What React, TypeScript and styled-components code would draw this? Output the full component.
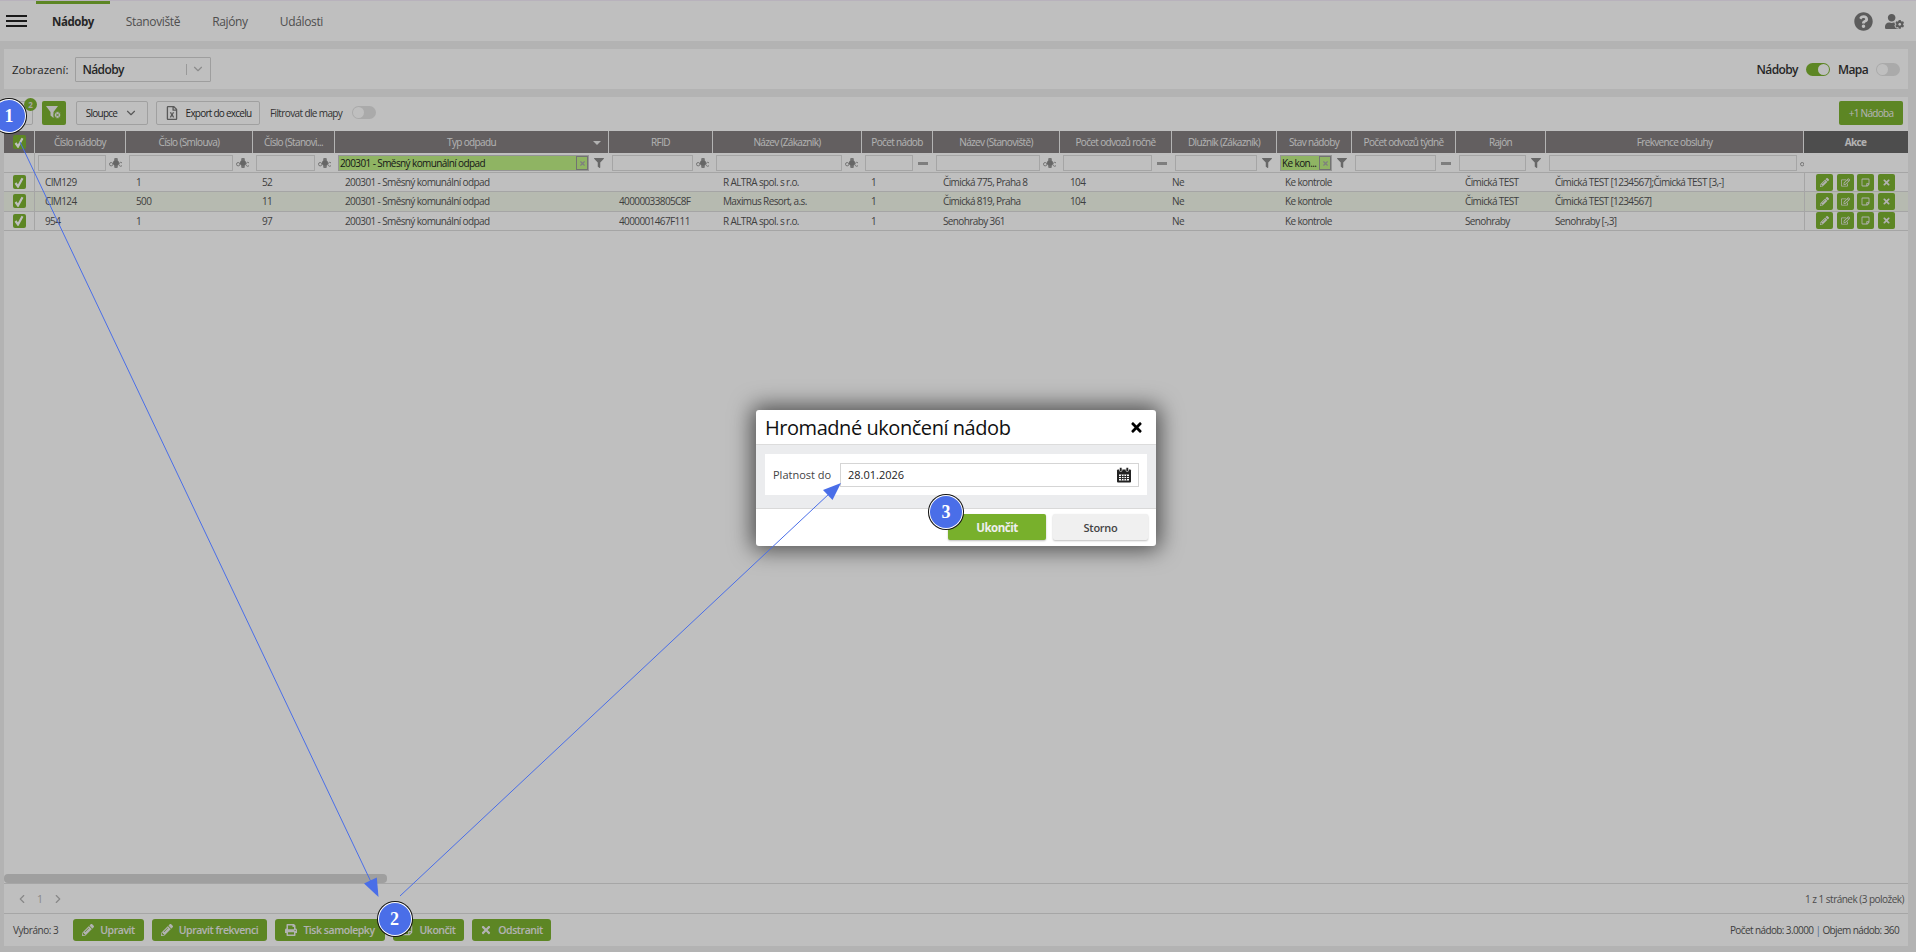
import React from "react";
import styled, { createGlobalStyle } from "styled-components";
import { ChevronDown, ChevronLeft, ChevronRight } from "lucide-react";
import {
  FaPencilAlt, FaPrint, FaTimes, FaRegEdit, FaRegStickyNote, FaFilter,
  FaQuestionCircle, FaUserCog, FaRegFileExcel,
} from "react-icons/fa";

const Global = createGlobalStyle`
  html, body { margin: 0; padding: 0; height: 100%; overflow: hidden; }
  body { font-family: "Open Sans", "Liberation Sans", sans-serif; color: #444; background: #efefef; }
  * { box-sizing: border-box; }
`;

const COLS = "31px 91px 127px 82px 274px 104px 149px 71px 127px 112px 105px 75px 104px 90px 258px 104px";
const GREEN = "#7db331";

const Page = styled.div`
  position: relative;
  width: 1916px; height: 952px; overflow: hidden;
  display: flex; flex-direction: column;
`;
const TopBar = styled.header`
  height: 41px; background: #fff; border-top: 1px solid #f6eefb;
  display: flex; align-items: center; padding: 0 12px 0 6px;
  flex: none;
`;
const Burger = styled.div`
  width: 21px; height: 12px; margin-right: 9px; flex: none;
  border-top: 2px solid #222; border-bottom: 2px solid #222; position: relative;
  &::after { content: ""; position: absolute; left: 0; right: 0; top: 3px; height: 2px; background: #222; }
`;
const Tab = styled.div<{ $active?: boolean }>`
  align-self: stretch; height: 40px; padding: 0 16px 3px; display: flex; align-items: center;
  font-size: ${p => (p.$active ? 11.5 : 12)}px;
  letter-spacing: ${p => (p.$active ? -0.45 : -0.35)}px;
  font-weight: ${p => (p.$active ? 700 : 400)};
  color: ${p => (p.$active ? "#333" : "#6a6a6a")};
  border-top: 3px solid ${p => (p.$active ? GREEN : "transparent")};
`;
const TopIcons = styled.div`
  margin-left: auto; display: flex; align-items: center; gap: 12px; color: #7b7b7b; font-size: 19px;
`;
const ViewBar = styled.section`
  flex: none; height: 40px; margin: 8px 8px 0 4px; background: #fff;
  display: flex; align-items: center; padding: 0 8px 0 8px; font-size: 11.5px; color: #333;
`;
const ViewLabel = styled.span` margin-right: 7px; `;
const ViewSelect = styled.div`
  width: 136px; height: 25px; border: 1px solid #d3d3d3; display: flex; align-items: center;
  padding: 0 5px 0 6px; font-weight: 600; font-size: 12px; letter-spacing: -.6px; color: #333; border-radius: 1px;
`;
const SelectSep = styled.i`
  margin-left: auto; width: 1px; height: 11px; background: #ccc; margin-right: 4px;
`;
const SwitchGroup = styled.div`
  margin-left: auto; display: flex; align-items: center; gap: 8px; font-weight: 600; font-size: 12px; letter-spacing: -.6px;
`;
const Switch = styled.div<{ $on?: boolean }>`
  width: 24px; height: 13px; border-radius: 7px; position: relative; flex: none;
  background: ${p => (p.$on ? GREEN : "#e3e3e3")};
  &::after {
    content: ""; position: absolute; top: 1px; width: 11px; height: 11px; border-radius: 50%; background: #fff;
    ${p => (p.$on ? "right: 1px;" : "left: 1px;")}
  }
`;
const GridPanel = styled.main`
  flex: 1; margin: 8px 8px 6px 4px; background: #fff; display: flex; flex-direction: column; min-height: 0;
`;
const Toolbar = styled.div`
  flex: none; height: 34px; display: flex; align-items: center; gap: 8px; padding: 0 5px 3px 0; font-size: 10px; color: #333;
`;
const OutlineButton = styled.div<{ $w: number; $ml?: number }>`
  width: ${p => p.$w}px; height: 24px; margin-left: ${p => p.$ml ?? 0}px; flex: none;
  border: 1px solid #d6d6d6; border-radius: 2px; display: flex; align-items: center; justify-content: center; gap: 7px;
  font-size: 10px; letter-spacing: -.75px; color: #333; font-weight: 500; position: relative;
`;
const Badge = styled.span`
  position: absolute; top: -4px; right: -5px; width: 13px; height: 13px; border-radius: 50%; background: ${GREEN};
  color: #ddd; font-size: 8px; font-weight: 700; letter-spacing: 0; display: flex; align-items: center; justify-content: center;
`;
const FilterButton = styled.div`
  width: 24px; height: 24px; margin-left: 1px; flex: none; background: ${GREEN}; border-radius: 2px; color: #fff;
  display: flex; align-items: center; justify-content: center;
`;
const MapLabel = styled.span` margin-left: 2px; font-weight: 500; font-size: 10px; letter-spacing: -.62px; width: 74px; white-space: nowrap; color: #444; `;
const AddButton = styled.div`
  margin-left: auto; width: 64px; height: 24px; background: ${GREEN}; border-radius: 2px; color: #f0f0f0;
  display: flex; align-items: center; justify-content: center; font-size: 10px; letter-spacing: -.7px;
`;
const HeadRow = styled.div`
  flex: none; display: grid; grid-template-columns: ${COLS}; height: 22px; background: #847f80;
`;
const HeadCell = styled.div<{ $dark?: boolean }>`
  display: flex; align-items: center; justify-content: center; position: relative; font-size: 10px; letter-spacing: -.65px; color: #eee;
  white-space: nowrap; overflow: hidden; font-weight: ${p => (p.$dark ? 700 : 400)};
  border-right: 1px solid ${p => (p.$dark ? "transparent" : "#f1f1f1")};
  background: ${p => (p.$dark ? "#676767" : "transparent")};
`;
const SortCaret = styled.i`
  position: absolute; right: 7px; top: 10px; width: 0; height: 0;
  border-left: 4px solid transparent; border-right: 4px solid transparent; border-top: 4px solid #eee;
`;
const FilterRow = styled.div`
  flex: none; display: grid; grid-template-columns: ${COLS}; height: 20px; border-bottom: 1px solid #ddd;
`;
const FilterCell = styled.div`
  display: flex; align-items: center; padding: 0 0 0 3px; overflow: hidden; height: 20px; min-width: 0;
  &:first-child { border-right: 1px solid #ddd; }
`;
const FilterInput = styled.div<{ $active?: boolean; $w?: number }>`
  flex: ${p => (p.$w ? `0 0 ${p.$w}px` : "1")}; min-width: 0; height: 16px; border: 1px solid ${p => (p.$active ? "#c7c7c7" : "#dcdcdc")};
  background: ${p => (p.$active ? "#bff184" : "#fff")};
  display: flex; align-items: center; padding-left: 1px; font-size: 10px; letter-spacing: -.6px; color: #222; white-space: nowrap; overflow: hidden;
`;
const ClearBox = styled.span`
  margin-left: auto; width: 12px; height: 14px; flex: none; border: 1px solid #999; color: #aaa;
  display: flex; align-items: center; justify-content: center; font-size: 7px;
`;
const FilterKind = styled.div`
  width: 20px; flex: none; height: 16px; display: flex; align-items: center; justify-content: center; color: #8a8a8a; font-size: 10px;
`;
const Row = styled.div<{ $hi?: boolean }>`
  flex: none; display: grid; grid-template-columns: ${COLS}; height: 19.3px; border-bottom: 1px solid #ddd;
  background: ${p => (p.$hi ? "#f3f8eb" : "#fff")}; font-size: 10px; letter-spacing: -.62px; color: #555;
`;
const Cell = styled.div<{ $pl: number }>`
  display: flex; align-items: center; padding-left: ${p => p.$pl}px; white-space: nowrap; overflow: hidden; min-width: 0;
`;
const CheckCell = styled.div`
  display: flex; align-items: center; justify-content: center; border-right: 1px solid #ddd;
`;
const CheckBox = styled.span`
  width: 13px; height: 14px; background: ${GREEN}; border-radius: 2px; color: #fff; display: flex; align-items: center; justify-content: center;
`;
const ActionCell = styled.div`
  display: flex; align-items: center; padding-left: 11px; gap: 3.6px; border-left: 1px solid #ddd;
`;
const ActionButton = styled.span`
  width: 17px; height: 17px; border-radius: 2px; background: ${GREEN}; color: #eee; display: flex; align-items: center; justify-content: center; font-size: 9px;
`;
const Spacer = styled.div` flex: 1; min-height: 0; `;
const ScrollThumb = styled.div`
  flex: none; width: 383px; height: 9px; background: #d5d5d5; border-radius: 4px;
`;
const Pager = styled.div`
  flex: none; height: 30px; border-top: 1px solid #dedede; display: flex; align-items: center; padding: 0 4px 0 11px; color: #b5b5b5; font-size: 10.5px; gap: 8px;
`;
const PagerInfo = styled.span` margin-left: auto; color: #666; font-size: 10px; letter-spacing: -.52px; `;
const Footer = styled.div`
  flex: none; height: 33px; border-top: 1px solid #dedede; display: flex; align-items: center; padding: 0 9px 0 9px; font-size: 10px; color: #555; gap: 8px;
`;
const Selected = styled.span` width: 52px; flex: none; font-size: 10px; letter-spacing: -.45px; white-space: nowrap; `;
const FootButton = styled.div<{ $w: number }>`
  width: ${p => p.$w}px; height: 22px; background: ${GREEN}; border-radius: 3px; color: #eee; display: flex; align-items: center; justify-content: center; gap: 6px;
  font-size: 10.5px; letter-spacing: -.45px; font-weight: 600; flex: none;
  svg { font-size: 12px; }
`;
const Totals = styled.span` margin-left: auto; font-size: 10px; letter-spacing: -.6px; color: #555; `;
const TotalsSep = styled.span` color: #6b93c4; `;
const Backdrop = styled.div`
  position: absolute; inset: 0; background: rgba(0,0,0,.25);
`;
const Modal = styled.div`
  position: absolute; left: 756px; top: 410px; width: 400px; height: 136px; background: #fff; border-radius: 3px;
  box-shadow: 0 0 22px 4px rgba(0,0,0,.6); display: flex; flex-direction: column; overflow: hidden;
`;
const ModalHead = styled.div`
  flex: none; height: 35px; display: flex; align-items: center; justify-content: space-between; padding: 0 12px 0 9px;
  border-bottom: 1px solid #dcdcdc; font-size: 20px; letter-spacing: -.45px; font-weight: 500; color: #111;
`;
const ModalBody = styled.div`
  flex: none; height: 64px; background: #ebecee; border-bottom: 1px solid #d9d9d9; padding: 9px 9px 0 9px;
`;
const FormBox = styled.div`
  height: 41px; background: #fff; display: flex; align-items: center; padding: 0 8px;
`;
const FormLabel = styled.label` font-size: 11px; color: #444; width: 67px; flex: none; `;
const DateInput = styled.div`
  flex: 1; height: 24px; border: 1px solid #d5d5d5; display: flex; align-items: center; justify-content: space-between; padding: 0 6px 0 7px; font-size: 11px; color: #222;
`;
const ModalFoot = styled.div`
  flex: 1; display: flex; align-items: flex-start; justify-content: flex-end; gap: 7px; padding: 5px 8px 0 0;
`;
const PrimaryBtn = styled.div`
  width: 98px; height: 26px; background: #78b02c; color: #eee; border-radius: 2px; font-size: 11.5px; letter-spacing: -.5px; font-weight: 700;
  display: flex; align-items: center; justify-content: center; box-shadow: 0 1px 2px rgba(0,0,0,.25);
`;
const SecondaryBtn = styled.div`
  width: 95px; height: 26px; background: #f0f0f0; color: #444; border-radius: 2px; font-size: 11px; letter-spacing: -.3px; font-weight: 600;
  display: flex; align-items: center; justify-content: center; box-shadow: 0 1px 2px rgba(0,0,0,.25);
`;
const Arrows = styled.svg`
  position: absolute; left: 0; top: 0; pointer-events: none;
`;
const Callout = styled.div<{ $x: number; $y: number }>`
  position: absolute; left: ${p => p.$x - 16}px; top: ${p => p.$y - 16}px; width: 32px; height: 32px; border-radius: 50%;
  background: #4a6ee8; color: #fff; font: 700 18px "Liberation Serif", serif;
  display: flex; align-items: center; justify-content: center;
  box-shadow: 0 0 0 1px #fff, 0 0 0 2px #111;
`;

const AbcIcon = () => (
  <svg width="14" height="12" viewBox="0 0 14 12" fill="#9a9a9a">
    <rect x="5.2" y="1" width="3.6" height="10" rx="1" />
    <rect x="4" y="3.5" width="6" height="5" rx="2" fill="#888" />
    <circle cx="2.2" cy="7.2" r="1.7" fill="none" stroke="#9a9a9a" />
    <path d="M13 5.9a1.9 1.9 0 1 0 0 2.8" fill="none" stroke="#9a9a9a" />
  </svg>
);
const DashIcon = () => (
  <svg width="11" height="5" viewBox="0 0 11 5"><rect width="10" height="3" y="1" fill="#a8a8a8" /></svg>
);
const FunnelClear = () => (
  <svg width="17" height="15" viewBox="0 0 17 15">
    <path d="M0 1h12L7.5 7v6L4.5 10.5V7z" fill="#f2f2f2" />
    <circle cx="11.5" cy="10" r="3.4" fill="#f2f2f2" stroke="#7db331" />
    <path d="M10 8.5l3 3m0-3l-3 3" stroke="#7db331" />
  </svg>
);
const CalendarIcon = () => (
  <svg width="16" height="16" viewBox="0 0 16 16">
    <rect x="1" y="2.5" width="14" height="13" rx="1" fill="#222" />
    <rect x="3.5" y="0.5" width="2.5" height="4" rx="1" fill="#222" stroke="#fff" strokeWidth=".6" />
    <rect x="10" y="0.5" width="2.5" height="4" rx="1" fill="#222" stroke="#fff" strokeWidth=".6" />
    <path d="M3 7.5h10v6H3z" fill="#fff" />
    <path d="M3 9.5h10M3 11.5h10M5.5 7.5v6M8 7.5v6M10.5 7.5v6" stroke="#222" strokeWidth=".9" />
  </svg>
);
const Tick = () => (
  <svg width="10" height="11" viewBox="0 0 10 11">
    <path d="M1.5 6L4 9.5L8.5 1.2" fill="none" stroke="#fff" strokeWidth="2.2" />
  </svg>
);
const Funnel = () => <FilterKind><FaFilter /></FilterKind>;
const Abc = () => <FilterKind><AbcIcon /></FilterKind>;
const Dash = () => <FilterKind><DashIcon /></FilterKind>;

const headers = ["Číslo nádoby", "Číslo (Smlouva)", "Číslo (Stanovi...", "Typ odpadu", "RFID", "Název (Zákazník)", "Počet nádob", "Název (Stanoviště)", "Počet odvozů ročně", "Dlužník (Zákazník)", "Stav nádoby", "Počet odvozů týdně", "Rajón", "Frekvence obsluhy"];

const filterKinds: React.FC[] = [Abc, Abc, Abc, Funnel, Abc, Abc, Dash, Abc, Dash, Funnel, Funnel, Dash, Funnel, Abc];

const cellPadding = [10, 10, 9, 10, 10, 10, 9, 10, 10, 0, 8, 10, 9, 9];

const rows = [
  ["CIM129", "1", "52", "200301 - Směsný komunální odpad", "", "R ALTRA spol. s r.o.", "1", "Čimická 775, Praha 8", "104", "Ne", "Ke kontrole", "", "Čimická TEST", "Čimická TEST [1234567];Čimická TEST [3,-]"],
  ["CIM124", "500", "11", "200301 - Směsný komunální odpad", "40000033805C8F", "Maximus Resort, a.s.", "1", "Čimická 819, Praha", "104", "Ne", "Ke kontrole", "", "Čimická TEST", "Čimická TEST [1234567]"],
  ["954", "1", "97", "200301 - Směsný komunální odpad", "4000001467F111", "R ALTRA spol. s r.o.", "1", "Senohraby 361", "", "Ne", "Ke kontrole", "", "Senohraby", "Senohraby [-,3]"],
];

export default function App() {
  return (
    <Page>
      <Global />
      <TopBar>
        <Burger />
        <Tab $active>Nádoby</Tab>
        <Tab>Stanoviště</Tab>
        <Tab>Rajóny</Tab>
        <Tab>Události</Tab>
        <TopIcons><FaQuestionCircle /><FaUserCog /></TopIcons>
      </TopBar>
      <ViewBar>
        <ViewLabel>Zobrazení:</ViewLabel>
        <ViewSelect>Nádoby<SelectSep /><ChevronDown size={14} color="#bbb" /></ViewSelect>
        <SwitchGroup>Nádoby<Switch $on />Mapa<Switch /></SwitchGroup>
      </ViewBar>
      <GridPanel>
        <Toolbar>
          <OutlineButton $w={29}><Badge>2</Badge></OutlineButton>
          <FilterButton><FunnelClear /></FilterButton>
          <OutlineButton $w={72} $ml={2}>Sloupce<ChevronDown size={14} color="#777" /></OutlineButton>
          <OutlineButton $w={104}><FaRegFileExcel size={14} color="#777" />Export do excelu</OutlineButton>
          <MapLabel>Filtrovat dle mapy</MapLabel>
          <Switch />
          <AddButton>+1 Nádoba</AddButton>
        </Toolbar>
        <HeadRow>
          <HeadCell><CheckBox><Tick /></CheckBox></HeadCell>
          {headers.map((h, i) => (
            <HeadCell key={h}>{h}{i === 3 && <SortCaret />}</HeadCell>
          ))}
          <HeadCell $dark>Akce</HeadCell>
        </HeadRow>
        <FilterRow>
          <FilterCell />
          {filterKinds.map((Kind, i) => (
            <FilterCell key={i}>
              {i === 3 && <FilterInput $active>200301 - Směsný komunální odpad<ClearBox><FaTimes /></ClearBox></FilterInput>}
              {i === 10 && <FilterInput $active>Ke kon...<ClearBox><FaTimes /></ClearBox></FilterInput>}
              {i !== 3 && i !== 10 && <FilterInput $w={i === 13 ? 248 : undefined} />}
              <Kind />
            </FilterCell>
          ))}
          <FilterCell />
        </FilterRow>
        {rows.map((r, i) => (
          <Row key={i} $hi={i === 1}>
            <CheckCell><CheckBox><Tick /></CheckBox></CheckCell>
            {r.map((c, j) => <Cell key={j} $pl={cellPadding[j]}>{c}</Cell>)}
            <ActionCell>
              <ActionButton><FaPencilAlt /></ActionButton>
              <ActionButton><FaRegEdit /></ActionButton>
              <ActionButton><FaRegStickyNote /></ActionButton>
              <ActionButton><FaTimes /></ActionButton>
            </ActionCell>
          </Row>
        ))}
        <Spacer />
        <ScrollThumb />
        <Pager>
          <ChevronLeft size={14} />
          <span>1</span>
          <ChevronRight size={14} />
          <PagerInfo>1 z 1 stránek (3 položek)</PagerInfo>
        </Pager>
        <Footer>
          <Selected>Vybráno: 3</Selected>
          <FootButton $w={71}><FaPencilAlt />Upravit</FootButton>
          <FootButton $w={115}><FaPencilAlt />Upravit frekvenci</FootButton>
          <FootButton $w={110}><FaPrint />Tisk samolepky</FootButton>
          <FootButton $w={71}><FaRegStickyNote />Ukončit</FootButton>
          <FootButton $w={79}><FaTimes />Odstranit</FootButton>
          <Totals>Počet nádob: 3.0000 <TotalsSep>|</TotalsSep> Objem nádob: 360</Totals>
        </Footer>
      </GridPanel>
      <Backdrop />
      <Modal>
        <ModalHead>Hromadné ukončení nádob<FaTimes size={15} color="#000" /></ModalHead>
        <ModalBody>
          <FormBox>
            <FormLabel>Platnost do</FormLabel>
            <DateInput>28.01.2026<CalendarIcon /></DateInput>
          </FormBox>
        </ModalBody>
        <ModalFoot>
          <PrimaryBtn>Ukončit</PrimaryBtn>
          <SecondaryBtn>Storno</SecondaryBtn>
        </ModalFoot>
      </Modal>
      <Arrows width="1916" height="952" viewBox="0 0 1916 952">
        <line x1="20" y1="142" x2="372" y2="884" stroke="#4a6ee8" />
        <polygon points="378.5,897 364,883.5 376.8,877.5" fill="#4a6ee8" />
        <line x1="400" y1="896" x2="830" y2="493" stroke="#4a6ee8" />
        <polygon points="841,483 832.5,500 823,490" fill="#4a6ee8" />
      </Arrows>
      <Callout $x={9} $y={116}>1</Callout>
      <Callout $x={394.5} $y={919}>2</Callout>
      <Callout $x={946} $y={512}>3</Callout>
    </Page>
  );
}
